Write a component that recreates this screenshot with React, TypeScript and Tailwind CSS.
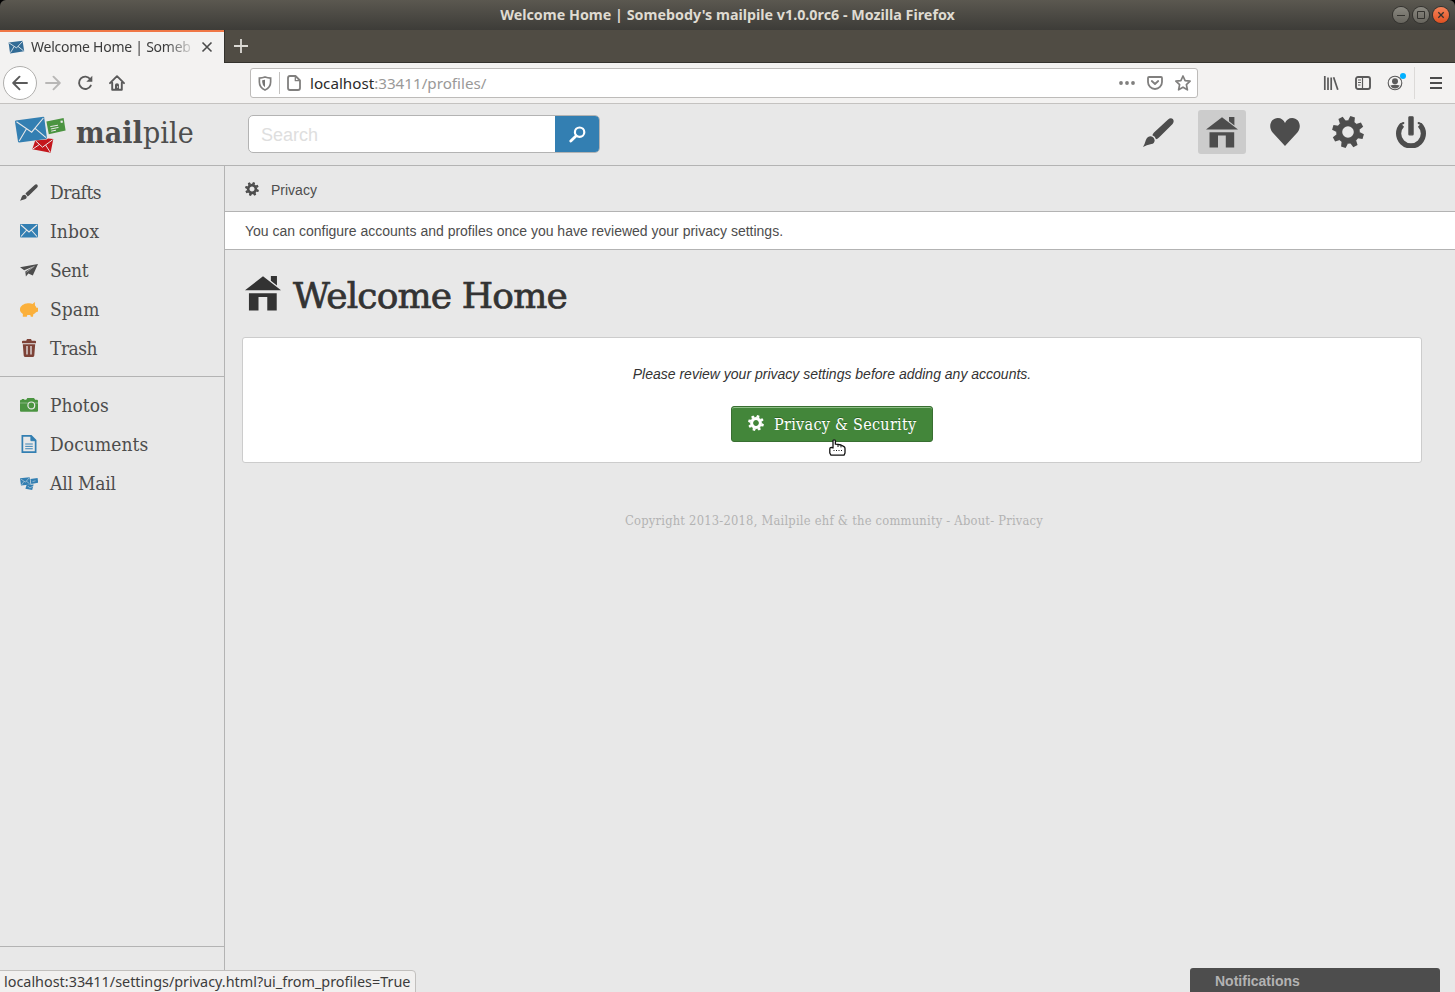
import { ReactNode } from "react";

type IconProps = { className?: string };

const slab = "font-['DejaVu_Serif_Condensed','DejaVu_Serif',serif] [font-stretch:condensed]";
const slabWide = "font-['DejaVu_Serif',serif]";
const chrome = "font-['Noto_Sans',sans-serif]";

function Home({ className }: IconProps) {
  return (
    <svg viewBox="0 0 32 31" className={className} fill="currentColor" preserveAspectRatio="none">
      <path d="M0 12.6 16 .3 32 12.6zM23 0h5.4v8.5L23 4.3zM3.5 15.2H28.2V30.5H19.8V18.5H12V30.5H3.5z" />
    </svg>
  );
}

function Brush({ className }: IconProps) {
  return (
    <svg viewBox="0 0 31 29" className={className} fill="currentColor">
      <path d="M9.4 17.2Q9.6 15.8 11 14.4L24.8 1.8Q27.6-.6 29.8 1 31.6 3.2 29.6 6L16 19.4Q14.4 21 13 21.2 12.2 18.4 9.4 17.2z" />
      <path d="M7.8 18.2Q11 18.8 11.7 22.4 11.4 25.4 8.4 26 3.4 27 0 28.9 1.8 26 2.8 22.2 4.2 18.2 7.8 18.2z" />
    </svg>
  );
}

function Gear({ className }: IconProps) {
  return (
    <svg viewBox="-16 -16 32 32" className={className}>
      <circle r="8.8" fill="none" stroke="currentColor" strokeWidth="6" />
      {[17, 62, 107, 152, 197, 242, 287, 332].map((a) => (
        <path key={a} d="M-3.3-11 -2.4-15.9H2.4L3.3-11z" fill="currentColor" transform={`rotate(${a})`} />
      ))}
    </svg>
  );
}

function Envelope({ className }: IconProps) {
  return (
    <svg viewBox="0 0 18 14" className={className}>
      <rect width="18" height="13.5" rx="1" fill="#337fb2" />
      <path d="M1 1 9 8 17 1M1 12.5 6.3 6.5M17 12.5 11.7 6.5" fill="none" stroke="#e8e8e8" strokeWidth="1.1" />
    </svg>
  );
}

function Plane({ className }: IconProps) {
  return (
    <svg viewBox="0 0 18 13" className={className} fill="#4d4d4d">
      <path d="M18 0 0 3.2 4.2 6.2 14.5 2 5.3 7.6 5.9 12.4 8.4 9.6 12.8 11.6z" />
      <path d="M14.5 2.2 6.4 8.2" stroke="#e8e8e8" strokeWidth=".5" />
    </svg>
  );
}

function Pig({ className }: IconProps) {
  return (
    <svg viewBox="0 0 18 15" className={className} fill="#fbb03b">
      <path d="M8 1.2C10 1 11.5 1.3 12.5 2L14.8 0 15 3.4Q16 4.4 16.4 5.8H18V9.6L16 10.2Q15 11.6 13.3 12.3L13 14.8H10.8L10.3 13H7.3L6.8 14.8H2.8L2.9 12C-3 8.5.5 1.7 8 1.2z" />
    </svg>
  );
}

function Trash({ className }: IconProps) {
  return (
    <svg viewBox="0 0 14 18" className={className} fill="#7d4237">
      <path d="M0 2.6Q0 1.8 1 1.8H4.2L5 0H9L9.8 1.8H13Q14 1.8 14 2.6V4.3H0zM.8 5.2H13.2L12.3 16.6Q12.2 17.9 11 17.9H3Q1.8 17.9 1.7 16.6z" />
      <path d="M5 7V15.6M9 7V15.6" stroke="#e8e8e8" strokeWidth="1.3" />
    </svg>
  );
}

function Camera({ className }: IconProps) {
  return (
    <svg viewBox="0 0 18 14" className={className}>
      <path d="M0 4.2V2.8Q.2 1.7 1.2 1.7H1.9V.9H4.2V1.7H6.2L7.3.1H14L15.2 1.7H17Q18 1.8 18 3V12.7Q18 13.8 17 13.8H1Q0 13.8 0 12.7z" fill="#4b9441" />
      <circle cx="11.3" cy="7.4" r="3.4" fill="none" stroke="#e8e8e8" strokeWidth="1.2" />
      <path d="M0 5H7.8M14.8 5H18" stroke="#e8e8e8" strokeWidth=".4" />
    </svg>
  );
}

function Doc({ className }: IconProps) {
  return (
    <svg viewBox="0 0 16 19" className={className} fill="none" stroke="#337fb2">
      <path d="M1 1H10.3L15 5.7V18H1z" strokeWidth="1.8" />
      <path d="M10 1V6H15z" fill="#337fb2" strokeWidth="1" />
      <path d="M4 9.5H12M4 12H12M4 14.5H12" strokeWidth="1" />
    </svg>
  );
}

function Pile({ className }: IconProps) {
  return (
    <svg viewBox="0 0 18 13" className={className} fill="#337fb2">
      <path d="M0 1.3 9.6.2 10.6 7.4 1 8.6zM10.4 2 17.6.9 18.2 5.6 11.3 7zM6.6 8 13.6 7.6 12.2 13 5.4 11.8z" />
      <path d="M.8 2 5.5 5.2 9 1M1.5 8 4 4.4M9.6 6.8 6.5 4.3M12.5 4.6 15.5 3.8M7.8 9 9.8 11 13 9.2" fill="none" stroke="#e8e8e8" strokeWidth=".5" />
    </svg>
  );
}

function Logo({ className }: IconProps) {
  return (
    <svg viewBox="0 0 52 38" className={className}>
      <path d="M.8 4.6 28.4.8Q29 .8 29.2 1.5L31.9 21.6Q32 22.6 31 22.9L4.3 26.4Q3.2 26.4 3 25.5L0 5.8Q0 4.8.8 4.6z" fill="#337fb2" />
      <path d="M1.5 5.8 16.7 16.2 28.4 2M4.2 25 11.5 12.8M31 21.6 19.8 12.2" fill="none" stroke="#e8e8e8" strokeWidth="1.1" />
      <path d="M31.4 5.5 48.6 2.1 50.6 14.4 33.8 18.2z" fill="#4b9441" />
      <path d="M35.3 10.6 43 9.2M35.8 13 43.5 11.4M36.2 15.2 41 14.2" stroke="#e8e8e8" strokeWidth="1" />
      <path d="M45.4 4.8 47.6 4.4 48 6.6 45.8 7z" fill="#e8e8e8" />
      <path d="M20.2 24.6 31.5 23.6 33 22.6 38.3 23.1 35.6 36.8 17.3 33.3z" fill="#c4161c" />
      <path d="M20.5 24.8 27.5 31.2 37.6 23.8M17.8 33 24.6 28.4M35.2 36.2 30.6 29" fill="none" stroke="#e8e8e8" strokeWidth="1" />
    </svg>
  );
}

function Power({ className }: IconProps) {
  return (
    <svg viewBox="0 0 32 32" className={className} fill="none" stroke="currentColor">
      <path d="M7.2 8.8A12.4 12.4 0 1 0 24.8 8.8" strokeWidth="5.2" />
      <path d="M6 8.2 8.4 7M26 8.2 23.6 7" strokeWidth="2" strokeLinecap="round" />
      <rect x="13.9" y=".8" width="4.2" height="18" rx=".6" fill="currentColor" strokeWidth="1.2" strokeLinejoin="round" />
    </svg>
  );
}

function Heart({ className }: IconProps) {
  return (
    <svg viewBox="0 0 30 28" className={className} fill="currentColor">
      <path d="M15 28 2.6 14.5C-2.5 8 1.2 0 7.8 0 11.2 0 13.8 2 15 5 16.2 2 18.8 0 22.2 0 28.8 0 32.5 8 27.4 14.5z" />
    </svg>
  );
}

function SideItem({ icon, spacing = "", children }: { icon: ReactNode; spacing?: string; children: string }) {
  return (
    <a className="flex h-[39px] items-center">
      <span className="ml-5 mr-3 flex w-[18px] justify-center">{icon}</span>
      <span className={`text-[19px] leading-[39px] text-[#4d4d4d] ${slab} ${spacing}`}>{children}</span>
    </a>
  );
}

function WindowButton({ close, children }: { close?: boolean; children: ReactNode }) {
  return (
    <span className={`flex size-4 items-center justify-center rounded-full ring-1 ring-[#33322e] ${close ? "bg-linear-to-b from-[#f68358] to-[#e0501f]" : "bg-linear-to-b from-[#8a8880] to-[#67655e]"}`}>
      <svg viewBox="0 0 16 16" className="size-4" fill="none" stroke="#33322e">{children}</svg>
    </span>
  );
}

export default function App() {
  return (
    <div className="relative flex h-[992px] w-[1455px] flex-col overflow-hidden bg-[#e8e8e8] font-['Liberation_Sans',sans-serif] text-[#4d4d4d]">
      <div className="bg-black">
        <header className="flex h-[30px] items-center rounded-t-[6px] bg-linear-to-b from-[#5b5850] to-[#3d3c38] pr-[6px]">
          <h1 className={`flex-1 pl-[62px] text-center text-[14.3px] leading-5 font-bold text-[#dfdbd2] ${chrome}`}>Welcome Home | Somebody's mailpile v1.0.0rc6 - Mozilla Firefox</h1>
          <div className="flex gap-1">
            <WindowButton><path d="M4 8.5H12" /></WindowButton>
            <WindowButton><path d="M4.5 4.5H11.5V11.5H4.5z" /></WindowButton>
            <WindowButton close><path d="M5.3 5.3 10.7 10.7M10.7 5.3 5.3 10.7" strokeWidth="1.3" /></WindowButton>
          </div>
        </header>
      </div>

      <div className="flex h-[33px] border-b border-[#33322d] bg-[#504c44]">
        <div className="flex h-[33px] w-[224px] items-center border-t-2 border-[#f07746] bg-[#f3f2f1] pl-2">
          <svg viewBox="0 0 18 14" className="mb-[2px] h-[14px] w-[17px]">
            <path d="M.6 2.2 15.4.3 17.2 11.6 2.2 13.8z" fill="#336c96" />
            <path d="M1 2.6 9 8 15.5 1M2.6 13 6.5 6.5M16.6 11.2 10.6 6.3" fill="none" stroke="#e8eef2" strokeWidth=".9" />
          </svg>
          <div className={`mb-[2px] ml-[6px] w-[162px] whitespace-nowrap text-[14px] leading-5 tracking-[-0.25px] text-[#3c3c3c] [mask-image:linear-gradient(to_right,black_135px,transparent_165px)] ${chrome}`}>Welcome Home | Someb</div>
          <svg viewBox="0 0 12 12" className="mb-px ml-2 size-3" stroke="#4b4b4b" strokeWidth="1.6"><path d="M1.5 1.5 10.5 10.5M10.5 1.5 1.5 10.5" /></svg>
        </div>
        <div className="flex w-8 items-center justify-center border-l border-[#33322d]">
          <svg viewBox="0 0 14 14" className="size-[14px]" stroke="#dcdad5" strokeWidth="1.8"><path d="M7 0V14M0 7H14" /></svg>
        </div>
      </div>

      <div className="flex h-[41px] items-center border-b border-[#c4c2c0] bg-[#f3f2f1]">
        <div className="ml-[3px] flex size-[34px] items-center justify-center rounded-full border border-[#b0afad] bg-white">
          <svg viewBox="0 0 16 16" className="size-4" fill="none" stroke="#5a5a5a" strokeWidth="1.9" strokeLinecap="round" strokeLinejoin="round"><path d="M15 8H1.3M7.5 1.7 1.2 8 7.5 14.3" /></svg>
        </div>
        <svg viewBox="0 0 16 16" className="ml-2 size-4" fill="none" stroke="#b8b7b6" strokeWidth="1.9" strokeLinecap="round" strokeLinejoin="round"><path d="M1 8H14.7M8.5 1.7 14.8 8 8.5 14.3" /></svg>
        <svg viewBox="0 0 16 16" className="ml-4 size-4" fill="none" stroke="#5a5a5a" strokeWidth="1.9"><path d="M13.3 4.2A6.2 6.2 0 1 0 13.8 10.6" strokeLinecap="round" /><path d="M15.3.8V6.8H9.3z" fill="#5a5a5a" stroke="none" /></svg>
        <svg viewBox="0 0 16 16" className="ml-4 size-4" fill="none" stroke="#5a5a5a" strokeWidth="1.9" strokeLinejoin="round" strokeLinecap="round"><path d="M1 8.2 8 1.2 15 8.2M3.2 7.8V14.8H12.8V7.8" /><path d="M8 8.2Q10 8.2 10 10V15H6V10Q6 8.2 8 8.2z" fill="#5a5a5a" stroke="none" /><path d="M8.6 11.7V12.3" stroke="#f3f2f1" strokeWidth="1" /></svg>

        <div className="ml-[125px] flex h-[30px] w-[948px] items-center rounded-[3px] border border-[#bdbbb9] bg-white">
          <svg viewBox="0 0 14 16" className="ml-[7px] h-[15px] w-[14px]" fill="none" stroke="#807f7e" strokeWidth="1.8"><path d="M7 1Q10 2 13 2.2V6.5Q13 12.5 7 15 1 12.5 1 6.5V2.2Q4 2 7 1z" /><path d="M7 4V12Q4 10 4 6.5V4.6z" fill="#757473" stroke="none" /></svg>
          <span className="ml-[7px] h-[22px] w-px bg-[#c4c2c0]" />
          <svg viewBox="0 0 14 16" className="ml-[7px] h-4 w-[14px]" fill="none" stroke="#807f7e" strokeWidth="1.8" strokeLinejoin="round"><path d="M3 1H8.5L13 5.5V13Q13 15 11 15H3Q1 15 1 13V3Q1 1 3 1z" /><path d="M8.3 1V5.7H13" strokeWidth="1.3" /></svg>
          <span className={`ml-[9px] flex-1 text-[15.2px] leading-5 text-[#9a9998] ${chrome}`}><span className="text-[#2b2b2b]">localhost</span>:33411/profiles/</span>
          <svg viewBox="0 0 16 4" className="h-1 w-4" fill="#807f7e"><circle cx="2" cy="2" r="1.9" /><circle cx="8" cy="2" r="1.9" /><circle cx="14" cy="2" r="1.9" /></svg>
          <svg viewBox="0 0 16 14" className="ml-3 h-[14px] w-4" fill="none" stroke="#807f7e" strokeWidth="1.8" strokeLinejoin="round" strokeLinecap="round"><path d="M2 1H14Q15 1 15 2V6A7 7 0 0 1 1 6V2Q1 1 2 1z" /><path d="M4.8 5 8 8 11.2 5" /></svg>
          <svg viewBox="0 0 16 16" className="ml-3 mr-[6px] size-4" fill="none" stroke="#807f7e" strokeWidth="1.7" strokeLinejoin="round"><path d="M8 1 10.1 5.6 15.1 6.2 11.4 9.6 12.4 14.8 8 12.2 3.6 14.8 4.6 9.6.9 6.2 5.9 5.6z" /></svg>
        </div>

        <svg viewBox="0 0 16 14" className="ml-[125px] h-[14px] w-4" fill="none" stroke="#5a5a5a" strokeWidth="1.7"><path d="M1.8 0V14M5 1.5V14M8.2 1.5V14" /><path d="M10.6 1.3 14.8 13.8" /></svg>
        <svg viewBox="0 0 16 14" className="ml-4 h-[14px] w-4" fill="none" stroke="#5a5a5a"><rect x="1" y="1" width="14" height="12" rx="2" strokeWidth="1.9" /><path d="M7.5 1V13" strokeWidth="1.2" /><path d="M3 4H6M3 6.5H6M3 9H5.5" strokeWidth="1" /></svg>
        <div className="relative ml-4 size-4">
          <svg viewBox="0 0 16 16" className="size-4"><circle cx="8" cy="8" r="6.8" fill="none" stroke="#5a5a5a" strokeWidth="1.1" /><circle cx="8" cy="6.2" r="3" fill="#5a5a5a" /><path d="M3.4 10.4Q8 9 12.6 10.4 11.3 13.4 8 13.4 4.7 13.4 3.4 10.4z" fill="#5a5a5a" /></svg>
          <span className="absolute -right-[3px] -top-[2px] size-[6px] rounded-full bg-[#00b0ff]" />
        </div>
        <span className="ml-[11px] h-8 w-px bg-[#dcdad8]" />
        <svg viewBox="0 0 12 12" className="ml-[15px] size-3" stroke="#4b4b4b" strokeWidth="1.8"><path d="M0 1H12M0 6H12M0 11H12" /></svg>
      </div>

      <header className="flex h-[62px] border-b border-[#b3b3b3]">
        <div className="flex w-[248px]">
          <Logo className="ml-[15px] mt-[12px] h-[38px] w-[52px]" />
          <div className={`ml-[9px] mt-[10px] whitespace-nowrap text-[30px] leading-[38px] tracking-[0.1px] text-[#4d4d4d] ${slab}`}><span className="font-bold">mail</span>pile</div>
        </div>
        <div className="mt-[11px] flex h-[38px] w-[352px] rounded-[5px] border border-[#b3b3b3] bg-white">
          <div className="flex-1 pl-3 text-[18px] leading-[38px] text-[#dedede]">Search</div>
          <div className="flex w-11 items-center justify-center rounded-r-[4px] bg-[#337fb2]">
            <svg viewBox="0 0 17 17" className="size-[17px]" fill="none" stroke="white"><circle cx="10.6" cy="6.2" r="4.7" strokeWidth="2.2" /><path d="M7 10 1.8 15" strokeWidth="2.8" strokeLinecap="round" /></svg>
          </div>
        </div>
        <nav className="ml-auto mr-[20px] mt-[6px] flex h-11 items-center gap-[15px]">
          <span className="flex w-12 justify-center pr-[2px]"><Brush className="h-[29px] w-[31px]" /></span>
          <span className="flex h-11 w-12 items-center justify-center rounded-[3px] bg-[#cccccc]"><Home className="h-[31px] w-8" /></span>
          <span className="flex w-12 justify-center"><Heart className="h-7 w-[30px]" /></span>
          <span className="flex w-12 justify-center"><Gear className="size-8" /></span>
          <span className="flex w-12 justify-center"><Power className="size-8" /></span>
        </nav>
      </header>

      <div className="flex flex-1">
        <aside className="flex w-[225px] flex-col border-r border-[#b3b3b3]">
          <div className="border-b border-[#b3b3b3] pb-2 pt-[7px]">
            <SideItem spacing="tracking-[-0.5px]" icon={<Brush className="h-[17px] w-[18px]" />}>Drafts</SideItem>
            <SideItem spacing="tracking-[0.1px]" icon={<Envelope className="mb-px h-[14px] w-[18px]" />}>Inbox</SideItem>
            <SideItem spacing="tracking-[-0.4px]" icon={<Plane className="h-[13px] w-[18px]" />}>Sent</SideItem>
            <SideItem spacing="tracking-[0.1px]" icon={<Pig className="mb-px h-[15px] w-[18px]" />}>Spam</SideItem>
            <SideItem spacing="tracking-[-0.5px]" icon={<Trash className="mb-px h-[18px] w-[14px]" />}>Trash</SideItem>
          </div>
          <div className="flex-1 pt-[9px]">
            <SideItem icon={<Camera className="mb-px h-[14px] w-[18px]" />}>Photos</SideItem>
            <SideItem spacing="tracking-[0.1px]" icon={<Doc className="mb-px h-[18px] w-4" />}>Documents</SideItem>
            <SideItem spacing="tracking-[-0.2px]" icon={<Pile className="h-[13px] w-[18px]" />}>All Mail</SideItem>
          </div>
          <div className="h-[46px] border-t border-[#b3b3b3]" />
        </aside>

        <main className="flex-1">
          <div className="flex h-[46px] items-center border-b border-[#b3b3b3] pl-5 text-[14px]">
            <Gear className="mr-3 size-[14px]" /><span className="mt-1">Privacy</span>
          </div>
          <div className="flex h-[38px] items-center border-b border-[#b3b3b3] bg-white pl-5 pt-[2px] text-[14px]">You can configure accounts and profiles once you have reviewed your privacy settings.</div>
          <h2 className={`flex h-[87px] items-start pl-5 text-[36px] leading-[48px] tracking-[-0.85px] text-[#333] [-webkit-text-stroke:0.7px_#333] ${slabWide}`}>
            <Home className="mr-3 mt-[26px] h-[35px] w-[36px]" /><span className="mt-[22px]">Welcome Home</span>
          </h2>
          <section className="ml-[17px] flex h-[126px] w-[1180px] flex-col items-center rounded-[3px] border border-[#ccc] bg-white">
            <p className="mt-[26px] text-[14px] italic leading-5 text-[#333]">Please review your privacy settings before adding any accounts.</p>
            <button className={`mt-[22px] flex h-9 w-[202px] items-center rounded-[3px] border border-[#396f32] bg-[#43863a] pl-4 text-[16px] tracking-[0.3px] text-white shadow-[inset_0_1px_0_#8fbf88] [text-shadow:0_-1px_0_#2f6427] ${slab}`}>
              <Gear className="mb-[2px] mr-[10px] size-4" /><span className="mt-[2px] whitespace-nowrap">Privacy &amp; Security</span>
            </button>
          </section>
          <footer className={`ml-[17px] mt-12 w-[1184px] text-center text-[12.8px] leading-5 tracking-[0.23px] text-[#b3b3b3] ${slab}`}>Copyright 2013-2018, Mailpile ehf &amp; the community - About- Privacy</footer>
        </main>
      </div>

      <svg viewBox="0 0 17 18" className="absolute left-[829px] top-[439px] h-[18px] w-[17px]" fill="white" stroke="#111" strokeWidth="1.3" strokeLinejoin="round">
        <path d="M4 9V2Q4 .8 5.2.8 6.4.8 6.4 2V5.2L9 5.4 12 6 15 7.6Q16 8.2 16 9.5V14L15 16.2H2L.8 14V9.8Q.8 8.4 2.4 8.4z" />
        <path d="M4.5 11.5H5.5M7 11.5H8M9.5 11.5H10.5M12 11.5H13M9 5.8V8M12 6.4V8.4" strokeWidth="1" />
      </svg>
      <div className={`absolute -left-px top-[970px] flex h-6 w-[417px] items-center rounded-tr-[4px] border border-[#c2c0be] bg-[#f1f0ef] pl-1 text-[14.4px] leading-5 text-[#3c3c3c] ${chrome}`}>localhost:33411/settings/privacy.html?ui_from_profiles=True</div>
      <div className="absolute left-[1190px] top-[968px] h-6 w-[250px] rounded-t-[3px] bg-[#4d4d4d] pl-[25px] text-[14px] font-bold leading-[26px] text-[#b3b3b3]">Notifications</div>
    </div>
  );
}
